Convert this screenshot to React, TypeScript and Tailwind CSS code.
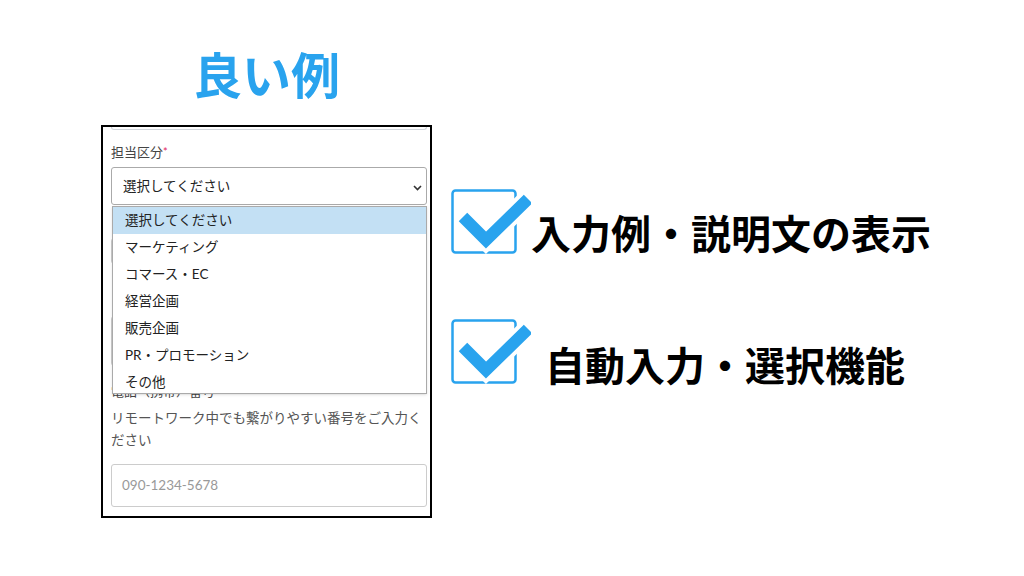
import React from "react";

const options = [
    "選択してください",
    "マーケティング",
    "コマース・EC",
    "経営企画",
    "販売企画",
    "PR・プロモーション",
    "その他",
];

function CheckIcon() {
    return (
        <svg width="80" height="68" viewBox="0 0 80 68" className="shrink-0">
            <rect x="1.5" y="2.5" width="63" height="62" rx="3" fill="none" stroke="#29a3ee" strokeWidth="2.5" />
            <polyline
                points="12,29 35,52 77,11"
                fill="none"
                stroke="#ffffff"
                strokeWidth="20"
                strokeLinejoin="miter"
            />
            <polyline
                points="12,29 35,52 77,11"
                fill="none"
                stroke="#29a3ee"
                strokeWidth="12"
                strokeLinejoin="miter"
            />
        </svg>
    );
}

export default function App() {
    return (
        <div className="w-[1024px] h-[576px] bg-white flex items-start pl-[101px] pt-[45px] font-['Noto_Sans_CJK_JP',sans-serif]">
            <div className="flex flex-col items-center w-[331px]">
                <h1 className="text-[49px] leading-[56px] font-bold text-[#29a3ee]">良い例</h1>
                <div className="relative mt-[24px] w-[331px] h-[393px] border-2 border-black bg-white pl-[8px] overflow-hidden font-['Lato','Noto_Sans_CJK_JP',sans-serif]">
                    <div className="w-[316px] h-[3px] border border-t-0 border-gray-300 rounded-b-[3px]" />
                    <div className="mt-[12px] text-[13px] leading-[20px] text-[#444]">
                        担当区分<span className="text-[#e0245e] text-[11px] align-top">*</span>
                    </div>
                    <div className="relative mt-[5px] w-[316px] h-[38px] border border-[#aaa] rounded-[3px] flex items-center pl-[11px] text-[13.5px] text-[#222]">
                        選択してください
                        <svg width="9" height="6" viewBox="0 0 9 6" className="absolute right-[4px] top-[17px]">
                            <polyline points="1,1 4.5,4.5 8,1" fill="none" stroke="#333" strokeWidth="1.6" />
                        </svg>
                    </div>
                    <div className="h-[176px] flex flex-col">
                        <div className="mt-[33px] w-[316px] h-[26px] border border-[#ccc] rounded-[3px]" />
                        <div className="mt-[52px] w-[316px] h-[50px] border border-[#ccc] rounded-[3px]" />
                    </div>
                    <div className="text-[13px] leading-[20px] text-[#444]">電話（携帯）番号</div>
                    <p className="mt-[6px] w-[316px] text-[13.5px] leading-[22px] text-[#555]">
                        リモートワーク中でも繋がりやすい番号をご入力ください
                    </p>
                    <div className="mt-[13px] w-[316px] h-[43px] border border-[#ccc] rounded-[3px] flex items-center pl-[10px] text-[13.5px] text-[#999]">
                        090-1234-5678
                    </div>
                    <ul className="absolute left-[9px] top-[79px] w-[315px] h-[188px] border border-[#aaa] bg-white shadow-sm">
                        {options.map((o, i) => (
                            <li
                                key={o}
                                className={`h-[27px] flex items-center pl-[12px] text-[13.5px] text-[#222] ${i === 0 ? "bg-[#c3e0f4]" : ""}`}
                            >
                                {o}
                            </li>
                        ))}
                    </ul>
                </div>
            </div>
            <div className="ml-[19px] mt-[143px] flex flex-col">
                <div className="flex items-start">
                    <CheckIcon />
                    <div className="mt-[24px] text-[40px] leading-[40px] font-bold text-black">入力例・説明文の表示</div>
                </div>
                <div className="mt-[62px] flex items-start">
                    <CheckIcon />
                    <div className="mt-[26px] ml-[14px] text-[40px] leading-[40px] font-bold text-black">自動入力・選択機能</div>
                </div>
            </div>
        </div>
    );
}
